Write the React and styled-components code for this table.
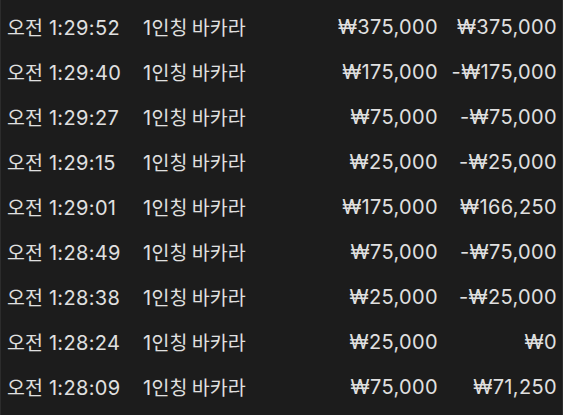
import React from "react";
import styled, { createGlobalStyle } from "styled-components";

const Global = createGlobalStyle`
  html, body { margin: 0; padding: 0; background: #1c1c1c; }
  body { font-family: Inter, "Noto Sans CJK KR", sans-serif; }
`;

const Panel = styled.div`
  box-sizing: border-box;
  width: 563px;
  height: 415px;
  background: #1c1c1c;
  border-left: 1px solid #2c2c2c;
  border-right: 1px solid #2c2c2c;
  padding: 4px 5px 0 6px;
  overflow: hidden;
`;

const Row = styled.div`
  display: grid;
  grid-template-columns: 136px 1fr auto 119px;
  align-items: center;
  height: 45px;
  color: #e0e0e0;
  font-size: 20px;
  letter-spacing: 0.35px;
  white-space: nowrap;
`;

const Cell = styled.span`
  text-align: ${(p) => (p.$right ? "right" : "left")};
`;

const Hangul = styled.span`
  font-family: "Noto Sans CJK KR", sans-serif;
  font-size: 19.5px;
  letter-spacing: 0;
`;

const rows = [
  ["1:29:52", "₩375,000", "₩375,000"],
  ["1:29:40", "₩175,000", "-₩175,000"],
  ["1:29:27", "₩75,000", "-₩75,000"],
  ["1:29:15", "₩25,000", "-₩25,000"],
  ["1:29:01", "₩175,000", "₩166,250"],
  ["1:28:49", "₩75,000", "-₩75,000"],
  ["1:28:38", "₩25,000", "-₩25,000"],
  ["1:28:24", "₩25,000", "₩0"],
  ["1:28:09", "₩75,000", "₩71,250"],
];

export default function App() {
  return (
    <>
      <Global />
      <Panel>
        {rows.map(([t, bet, res]) => (
          <Row key={t}>
            <Cell>
              <Hangul>오전</Hangul> {t}
            </Cell>
            <Cell>
              1<Hangul>인칭 바카라</Hangul>
            </Cell>
            <Cell $right>{bet}</Cell>
            <Cell $right>{res}</Cell>
          </Row>
        ))}
      </Panel>
    </>
  );
}
